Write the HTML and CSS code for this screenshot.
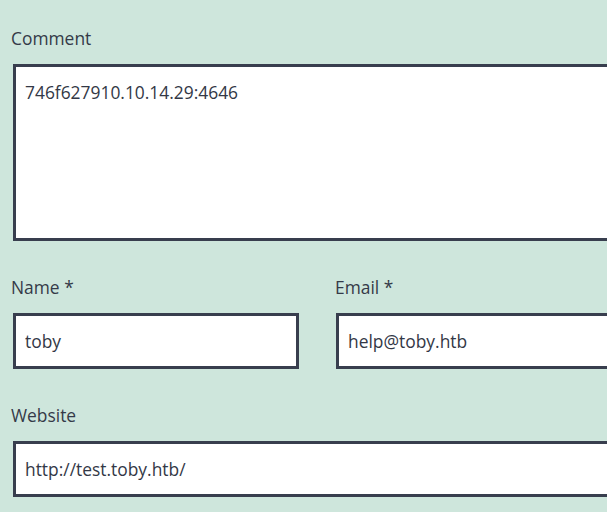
FILE: index.html
```html
<!DOCTYPE html>
<html lang="en">
<head>
<meta charset="utf-8">
<link rel="stylesheet" href="styles.css">
</head>
<body>
<form class="form">
  <div class="field">
    <label class="label" for="comment">Comment</label>
    <textarea id="comment" class="control area">746f627910.10.14.29:4646</textarea>
  </div>
  <div class="row">
    <div class="field">
      <label class="label" for="name">Name *</label>
      <input id="name" class="control" type="text" value="toby">
    </div>
    <div class="field">
      <label class="label" for="email">Email *</label>
      <input id="email" class="control" type="text" value="help@toby.htb">
    </div>
  </div>
  <div class="field">
    <label class="label" for="url">Website</label>
    <input id="url" class="control" type="text" value="http://test.toby.htb/">
  </div>
</form>
</body>
</html>
```
FILE: styles.css
```css
html, body {
  margin: 0;
  padding: 0;
  background: #cee6dc;
  overflow: hidden;
}
body {
  width: 607px;
  height: 512px;
}
.form {
  width: 660px;
  padding: 26px 0 0 10px;
  font-family: "Open Sans", "Noto Sans", sans-serif;
  font-size: 17.4px;
  color: #333846;
}
.field {
  display: flex;
  flex-direction: column;
  margin-bottom: 34px;
  min-width: 0;
}
.row {
  display: grid;
  grid-template-columns: 289px 1fr;
  column-gap: 35px;
}
.label {
  display: block;
  line-height: 24px;
  margin-bottom: 14px;
  padding-left: 1px;
  color: #343a48;
}
.control {
  display: block;
  margin: 0 0 0 3px;
  box-sizing: border-box;
  height: 56px;
  border: 3px solid #383e4e;
  border-radius: 0;
  background: #ffffff;
  padding: 13px 9px;
  font-family: inherit;
  font-size: 17.4px;
  line-height: 24px;
  color: #333846;
  outline: none;
}
.row .field + .field .control {
  margin-left: 2px;
}
.area {
  height: 177px;
  resize: none;
  overflow: hidden;
}
```
